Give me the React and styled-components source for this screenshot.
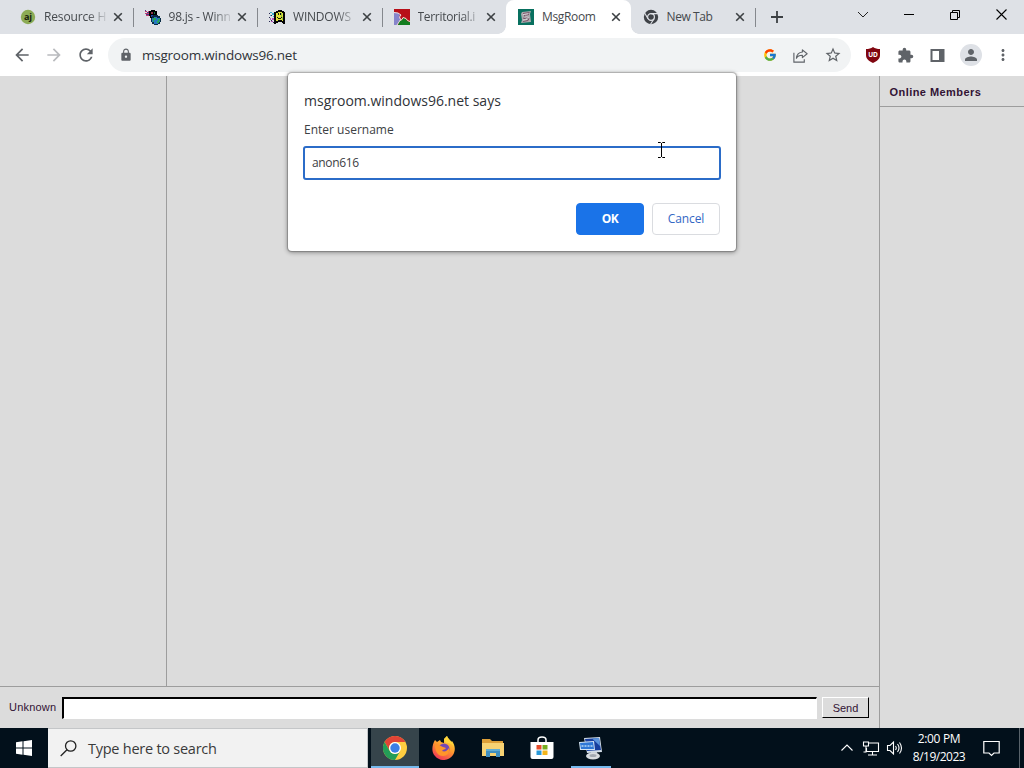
import React from "react";
import styled, { createGlobalStyle } from "styled-components";
import {
  MdArrowBack,
  MdArrowForward,
  MdRefresh,
  MdLock,
  MdStarBorder,
  MdExtension,
  MdPerson,
  MdMoreVert,
} from "react-icons/md";
import { FcGoogle } from "react-icons/fc";

const Global = createGlobalStyle`
  * { box-sizing: border-box; }
  body { margin: 0; overflow: hidden; }
  button, input { margin: 0; font: inherit; }
  svg { display: block; flex: none; }
`;

const Screen = styled.div`
  width: 1024px;
  height: 768px;
  position: relative;
  display: flex;
  flex-direction: column;
  overflow: hidden;
  background: #dcdcdc;
  font-family: "Open Sans", "Noto Sans", sans-serif;
`;

const Label = styled.span`
  white-space: nowrap;
  font-size: ${(p) => p.$size || 12}px;
  letter-spacing: ${(p) => p.$track || 0}px;
  line-height: ${(p) => p.$line || 16}px;
  font-weight: ${(p) => p.$weight || 400};
  color: ${(p) => p.$color || "#3c4043"};
`;

/* ---- Tab strip ---- */
const TabStrip = styled.header`
  height: 34px;
  flex: none;
  display: flex;
  padding-left: 8px;
  background: #dee1e6;
`;

const Tab = styled.div`
  width: 124.5px;
  height: 34px;
  position: relative;
  display: flex;
  align-items: center;
  padding: 0 10px 0 12px;
  background: ${(p) => (p.$active ? "#fff" : "transparent")};
  border-radius: 8px 8px 0 0;
  ${(p) =>
    p.$active &&
    `&::before, &::after {
      content: ""; position: absolute; bottom: 0; width: 8px; height: 8px;
    }
    &::before { left: -8px; background: radial-gradient(circle at 0 0, transparent 7.5px, #fff 8px); }
    &::after { right: -8px; background: radial-gradient(circle at 100% 0, transparent 7.5px, #fff 8px); }`}
`;

const TabTitle = styled.div`
  width: 62px;
  margin-left: 8px;
  display: flex;
  mask-image: ${(p) => (p.$fade ? "linear-gradient(90deg, #000 70%, transparent 105%)" : "none")};
`;

const TabClose = styled.span`
  display: flex;
  margin-left: auto;
`;

const Divider = styled.i`
  position: absolute;
  right: -1px;
  top: 8px;
  width: 1px;
  height: 19px;
  background: #85888d;
`;

const NewTab = styled.div`
  display: flex;
  align-items: center;
  padding-left: 16px;
`;

const WindowButtons = styled.div`
  margin-left: auto;
  display: flex;
  height: 29px;
`;

const WindowButton = styled.div`
  width: 46px;
  display: flex;
  align-items: center;
  justify-content: center;
`;

/* ---- Toolbar ---- */
const Toolbar = styled.nav`
  height: 42px;
  flex: none;
  display: flex;
  align-items: center;
  padding: 0 12px;
  background: #fff;
  color: #5f6368;
`;

const NavIcons = styled.div`
  display: flex;
  gap: 12px;
  width: 96px;
`;

const AddressBar = styled.div`
  width: 744px;
  height: 34px;
  display: flex;
  align-items: center;
  padding: 0 9px 0 11px;
  border-radius: 17px;
  background: #f1f3f4;
`;

const AddressText = styled.div`
  flex: 1;
  display: flex;
  margin-left: 9px;
`;

const AddressActions = styled.div`
  display: flex;
  align-items: center;
  gap: 15px;
  margin-left: -1px;
`;

const Extensions = styled.div`
  flex: 1;
  display: flex;
  align-items: center;
  gap: 15.5px;
  margin-left: 14px;
`;

const PanelIcon = styled.div`
  margin: 0 -1px 0 1px;
`;

const Avatar = styled.div`
  width: 22px;
  height: 22px;
  display: flex;
  align-items: center;
  justify-content: center;
  border-radius: 50%;
  background: #dee1e6;
`;

const MenuIcon = styled.div`
  margin-left: -3px;
`;

/* ---- Chat page ---- */
const Page = styled.main`
  flex: 1;
  display: flex;
  font-family: "Liberation Sans", Arial, sans-serif;
`;

const ChatArea = styled.section`
  width: 880px;
  display: flex;
  flex-direction: column;
  border-right: 1px solid #9d9d9d;
`;

const Panels = styled.div`
  flex: 1;
  display: flex;
  border-bottom: 1px solid #9d9d9d;
`;

const Channels = styled.aside`
  width: 167px;
  border-right: 1px solid #9d9d9d;
`;

const Composer = styled.div`
  height: 41px;
  display: flex;
  align-items: center;
  padding: 0 10px 0 9px;
`;

const NameCell = styled.div`
  width: 53px;
  display: flex;
  padding-bottom: 1px;
`;

const MessageBox = styled.div`
  flex: 1;
  height: 22px;
  background: #fff;
  border: 1px solid;
  border-width: 2px 1px 1px 2px;
  border-color: #000 #fff #fff #000;
  margin-right: 5px;
`;

const SendButton = styled.button`
  width: 47px;
  height: 21px;
  padding: 0;
  display: flex;
  align-items: center;
  justify-content: center;
  background: #dcdcdc;
  border: 1px solid;
  border-color: #fff #000 #000 #fff;
`;

const Members = styled.aside`
  flex: 1;
`;

const MembersHeader = styled.div`
  height: 31px;
  display: flex;
  align-items: center;
  padding: 1px 0 0 9.5px;
  border-bottom: 1px solid #9d9d9d;
`;

/* ---- Prompt dialog ---- */
const Dialog = styled.div`
  position: absolute;
  left: 288px;
  top: 73px;
  width: 448px;
  height: 178px;
  display: flex;
  flex-direction: column;
  padding: 17px 16px 16px;
  background: #fff;
  border-radius: 4px;
  box-shadow: 0 0 1px 0.5px rgba(0, 0, 0, 0.22), 0 1px 4px 1px rgba(0, 0, 0, 0.32);
`;

const DialogMessage = styled.div`
  display: flex;
  margin-top: 8px;
`;

const DialogField = styled.div`
  height: 34px;
  margin: 6px -1px 0;
  display: flex;
  align-items: center;
  padding: 0 7px;
  border: 2px solid #2b6cc8;
  border-radius: 3px;
`;

const DialogButtons = styled.div`
  margin-top: auto;
  display: flex;
  justify-content: flex-end;
  gap: 8px;
`;

const DialogButton = styled.button`
  width: 68px;
  height: 32px;
  padding: 0;
  display: flex;
  align-items: center;
  justify-content: center;
  border-radius: 4px;
  border: 1px solid ${(p) => (p.$primary ? "#1a73e8" : "#dadce0")};
  background: ${(p) => (p.$primary ? "#1a73e8" : "#fff")};
`;

const Pointer = styled.div`
  position: absolute;
  left: 657px;
  top: 142px;
`;

/* ---- Taskbar ---- */
const Taskbar = styled.footer`
  height: 40px;
  flex: none;
  display: flex;
  background: #02101b;
`;

const StartButton = styled.div`
  width: 48px;
  display: flex;
  align-items: center;
  justify-content: center;
`;

const SearchBox = styled.div`
  width: 320px;
  margin-right: 3px;
  display: flex;
  align-items: center;
  gap: 11px;
  padding: 1px 0 0 12px;
  background: #f2f2f2;
  border: 1px solid #c4c6c8;
  border-left: 0;
`;

const TaskButton = styled.div`
  width: 48px;
  margin-right: 1px;
  display: flex;
  align-items: center;
  justify-content: center;
  background: ${(p) => (p.$active ? "#36444b" : "transparent")};
  box-shadow: ${(p) => (p.$running ? "inset 0 -2px #76b9ed" : "none")};
`;

const TaskWindow = styled(TaskButton)`
  width: 40px;
  margin-left: 4px;
`;

const Tray = styled.div`
  margin-left: auto;
  display: flex;
  align-items: center;
`;

const Clock = styled.div`
  width: 72px;
  display: flex;
  flex-direction: column;
  align-items: center;
`;

const Notifications = styled.div`
  width: 33px;
  display: flex;
  justify-content: center;
`;

const ShowDesktop = styled.div`
  width: 5px;
  height: 40px;
  margin-left: 11px;
  border-left: 1px solid #59636b;
`;

const AjIcon = () => (
  <svg width="16" height="16" viewBox="0 0 16 16">
    <circle cx="8" cy="8" r="7.2" fill="#8cab55" />
    <text x="8" y="11" textAnchor="middle" fontFamily="Open Sans, sans-serif" fontWeight="700" fontSize="9" fill="#16200c">aj</text>
  </svg>
);

const Win98Icon = () => (
  <svg width="16" height="16" viewBox="0 0 16 16" shapeRendering="crispEdges">
    <path fill="#c23a72" d="M0 2h2v1H0zM3 2h2v1H3zM0 4h4v1H0zM1 6h3v1H1z" />
    <path fill="#4a3f86" d="M0 1h1v1H0zM2 3h3v1H2zM1 5h3v1H1z" />
    <path fill="#000" d="M6 1h4v1h2v6h1v1H5V7H4V2h2z" />
    <path fill="#8d3447" d="M6 3h2v2H6z" />
    <path fill="#177a3c" d="M9 3h1v2H9z" />
    <path fill="#b5b04a" d="M9 6h1v1H9z" />
    <path fill="#2747a9" d="M6 6h2v2H6z" />
    <path fill="#0a2c45" d="M8 6h5v1h2v2h1v4h-1v2h-2v1H9v-1H7v-2H6V9h1V7h1z" />
    <path fill="#2677bf" d="M9 8h3v1h3v4h-2v2H9v-2H7V9h2z" />
    <path fill="#25a957" d="M9 9h2v2H9v2H8V9h1zM13 10h2v2h-1v2h-2v-2h1z" />
  </svg>
);

const Win95Icon = () => (
  <svg width="16" height="16" viewBox="0 0 16 16" shapeRendering="crispEdges">
    <path fill="#39aecb" d="M1 3h2v1H1zM3 4h2v2H3zM1 6h1v1H1zM4 7h1v1H4z" />
    <path fill="#b950b9" d="M1 9h1v2H1zM3 9h2v2H3zM2 12h2v1H2z" />
    <path fill="#252850" d="M0 4h1v1H0zM2 6h1v1H2zM0 8h1v1H0zM2 11h1v1H2zM0 12h1v1H0zM4 13h1v1H4z" />
    <path fill="#050505" d="M5 3h2V2h2V1h4v1h2v1h1v12h-2v-1h-1v-1H9v1H7v1H5z" />
    <path fill="#dfe03a" d="M9 3h4v1h1v8h-1v-1H9v1H7V4h2z" />
    <path fill="#9bc83a" d="M12 4h1v4h-1zM13 8h1v3h-1z" />
    <path fill="#111" d="M9 4h1v2H9zM11 4h1v2h-1zM8 8h1v1H8zM9 9h3v1H9zM12 8h1v1h-1z" />
  </svg>
);

const TerritorialIcon = () => (
  <svg width="16" height="16" viewBox="0 0 16 16">
    <path fill="#b80f18" d="M0 0h16v16H0z" />
    <path fill="#8784cb" d="M0 3.500l4 .5 2 2-1 2 2 2-2 3-2 3H0z" />
    <path fill="#137d20" d="M4 16l1-4 3-1 1-2 3 1 1 2 3 1v3z" />
    <path fill="none" stroke="#eee1df" strokeWidth="1" d="M0 3.500l4 .5 3 2-1.500 2L6.500 10.500 5 13l-2 3M6 11.500l2-1 1-2 3 1 1.500 2 2.500 1" />
  </svg>
);

const MsgRoomIcon = () => (
  <svg width="16" height="16" viewBox="0 0 16 16">
    <path fill="#08705f" d="M0 0h16v16H0z" />
    <path fill="#aaa9ad" d="M4 3l9-1-1 3 1 8-10 1 1-3-1-6z" />
    <path stroke="#7c5268" strokeWidth="1" fill="none" d="M5 4.500l6.500-1M11 5.500l-5 1 5 3-1 2-5 1M5 9l3 1" />
    <path stroke="#e0dfe1" strokeWidth=".8" fill="none" d="M5 5.600l5-.8M7 7l4 2M5 11l4-.6" />
  </svg>
);

const ChromeMono = () => (
  <svg width="16" height="16" viewBox="0 0 16 16">
    <circle cx="8" cy="8" r="7.2" fill="#3f4247" />
    <circle cx="8" cy="8" r="3.4" fill="none" stroke="#dee1e6" strokeWidth="1.2" />
    <path d="M8 4.600h7M5 9.700L1.500 3.800M11 9.800L7.400 15.500" stroke="#dee1e6" strokeWidth="1.1" />
  </svg>
);

const Cross = () => (
  <svg width="10" height="10" viewBox="0 0 10 10">
    <path d="M1.200 1.200l7.600 7.600M8.800 1.200L1.200 8.800" stroke="#3c4043" strokeWidth="1.600" />
  </svg>
);

const ShareIcon = () => (
  <svg width="17" height="17" viewBox="0 0 18 18" fill="none" stroke="#5f6368" strokeWidth="1.200">
    <path d="M2 6v10h11v-3" />
    <path d="M11 3l5 4.200-5 4V8.800C8 8.700 6 9.600 4.700 12 5 8 7.400 5.700 11 5.300z" strokeLinejoin="round" />
  </svg>
);

const Shield = () => (
  <svg width="16" height="16" viewBox="0 0 16 16">
    <path fill="#800610" d="M8 0c2 1.400 4.300 2 7 2v6c0 4-3 6.300-7 8-4-1.700-7-4-7-8V2c2.700 0 5-.6 7-2z" />
    <text x="8" y="9.500" textAnchor="middle" fontFamily="Open Sans, sans-serif" fontWeight="700" fontSize="6.500" fill="#fff">UD</text>
  </svg>
);

const ChromeColor = () => (
  <svg width="24" height="24" viewBox="0 0 24 24">
    <circle cx="12" cy="12" r="12" fill="#ffcd40" />
    <path fill="#e14436" d="M1.600 6A12 12 0 0 1 22.400 6H12a6 6 0 0 0-5.200 9z" />
    <path fill="#249d57" d="M1.600 6A12 12 0 0 0 12 24l5.200-9A6 6 0 0 1 6.800 15z" />
    <circle cx="12" cy="12" r="6" fill="#fff" />
    <circle cx="12" cy="12" r="4.700" fill="#3c7fe5" />
  </svg>
);

const Firefox = () => (
  <svg width="24" height="24" viewBox="0 0 24 24">
    <defs>
      <linearGradient id="fox" x1=".8" y1="0" x2=".3" y2="1">
        <stop offset="0" stopColor="#ffe63d" />
        <stop offset=".5" stopColor="#ff982e" />
        <stop offset="1" stopColor="#f03458" />
      </linearGradient>
    </defs>
    <path fill="url(#fox)" d="M3 4l2 2 3-2 1 2 3 1V3l3-3c1 3 3 3 4 6l1-1c3 4 4 9 1 14-4 6-13 7-18 1C-1 16 0 9 3 4z" />
    <circle cx="12" cy="13" r="5.500" fill="#7647b5" />
    <path fill="#ff952a" d="M3 9c4-1 5 1 8 2l3 1c-1 2-3 1-4 3 3 1 5 0 7-3 1 5-2 8-6 8-4 0-8-3-8-11z" />
    <path fill="#ffd53b" d="M12 3l3-3c1 4 6 5 7 11-2-3-4-4-6-4-3 0-4-2-4-4z" />
  </svg>
);

const Folder = () => (
  <svg width="22" height="20" viewBox="0 0 22 20">
    <path fill="#dd9f38" d="M0 1h8l2 2h11v5H0z" />
    <path fill="#f7d273" d="M0 5h22v13H0z" />
    <path fill="#408fc0" d="M4 11h14v8h-4v-4H8v4H4z" />
    <path fill="#62add3" d="M4 11h14v2H4z" />
  </svg>
);

const Store = () => (
  <svg width="24" height="24" viewBox="0 0 24 24">
    <path d="M8 7V4c0-4 8-4 8 0v3" fill="none" stroke="#fff" strokeWidth="1.500" />
    <path d="M.5 6h23v15q0 2-2 2h-19q-2 0-2-2z" fill="#fff" />
    <path d="M6.500 9h5v4.500h-5z" fill="#e74c2b" />
    <path d="M12.500 9h5v4.500h-5z" fill="#77ad20" />
    <path d="M6.500 14.500h5V19h-5z" fill="#2999d8" />
    <path d="M12.500 14.500h5V19h-5z" fill="#f3b51b" />
  </svg>
);

const RemotePc = () => (
  <svg width="24" height="24" viewBox="0 0 24 24">
    <path fill="#b6bbc4" d="M12 15h6v4h-6z" />
    <ellipse cx="14" cy="20" rx="7" ry="3.500" fill="#d9dce0" />
    <ellipse cx="14" cy="19.500" rx="3.500" ry="1.500" fill="#a2a8b0" />
    <path fill="#d3dde8" d="M5 2l16-1 2 15-15 1z" />
    <path fill="#183f9f" d="M6 3l14-1 2 12-14 1z" />
    <path fill="#5b94dd" d="M13 2.500l7-.5 1 8z" />
    <path fill="#d3e3f3" d="M0 6l15-1 1 9H1z" />
    <path fill="#2e77d6" d="M1 7l13-1 1 7H2z" />
    <path stroke="#b5d7f7" strokeDasharray="2 1" strokeWidth="1.500" d="M2.500 10h11" />
  </svg>
);

const TABS = [
  { title: "Resource H", icon: AjIcon, fade: true, line: true, track: -0.15 },
  { title: "98.js - Winn", icon: Win98Icon, fade: true, line: true, track: -0.2 },
  { title: "WINDOWS", icon: Win95Icon, fade: true, line: true, track: -0.2 },
  { title: "Territorial.i", icon: TerritorialIcon, fade: true, track: -0.3 },
  { title: "MsgRoom", icon: MsgRoomIcon, active: true, track: -0.35 },
  { title: "New Tab", icon: ChromeMono, line: true, track: -0.4 },
];

export default function App() {
  return (
    <Screen>
      <Global />
      <TabStrip>
        {TABS.map(({ title, icon: Icon, fade, line, active, track }) => (
          <Tab key={title} $active={active}>
            <Icon />
            <TabTitle $fade={fade}>
              <Label $size={12} $track={track} $color="#45494d">{title}</Label>
            </TabTitle>
            <TabClose><Cross /></TabClose>
            {line && <Divider />}
          </Tab>
        ))}
        <NewTab>
          <svg width="12" height="12" viewBox="0 0 12 12">
            <path d="M6 0v12M0 6h12" stroke="#3c4043" strokeWidth="1.800" />
          </svg>
        </NewTab>
        <WindowButtons>
          <WindowButton>
            <svg width="12" height="8" viewBox="0 0 12 8"><path d="M1 1l5 5 5-5" fill="none" stroke="#222" /></svg>
          </WindowButton>
          <WindowButton>
            <svg width="10" height="10" viewBox="0 0 10 10"><path d="M0 4.500h10" stroke="#000" /></svg>
          </WindowButton>
          <WindowButton>
            <svg width="10" height="10" viewBox="0 0 10 10" fill="none" stroke="#000"><path d="M.5 2.500h7v7h-7zM2.500 2.500v-2h7v7h-2" /></svg>
          </WindowButton>
          <WindowButton>
            <svg width="11" height="11" viewBox="0 0 11 11"><path d="M.5.5l10 10M10.500.5l-10 10" stroke="#000" strokeWidth="1.100" /></svg>
          </WindowButton>
        </WindowButtons>
      </TabStrip>

      <Toolbar>
        <NavIcons>
          <MdArrowBack size={20} />
          <MdArrowForward size={20} color="#b9bbbe" />
          <MdRefresh size={20} />
        </NavIcons>
        <AddressBar>
          <MdLock size={14} />
          <AddressText>
            <Label $size={13.5} $line={20} $track={-0.2} $color="#303338">msgroom.windows96.net</Label>
          </AddressText>
          <AddressActions>
            <FcGoogle size={14} />
            <ShareIcon />
            <MdStarBorder size={18} />
          </AddressActions>
        </AddressBar>
        <Extensions>
          <Shield />
          <MdExtension size={17} />
          <PanelIcon>
            <svg width="15" height="15" viewBox="0 0 15 15">
              <path fill="#5f6368" d="M.5 1h14v13H.5zM2.500 3v9H9V3z" fillRule="evenodd" />
            </svg>
          </PanelIcon>
          <Avatar><MdPerson size={18} /></Avatar>
          <MenuIcon><MdMoreVert size={18} /></MenuIcon>
        </Extensions>
      </Toolbar>

      <Page>
        <ChatArea>
          <Panels><Channels /></Panels>
          <Composer>
            <NameCell><Label $size={11} $track={0.2} $color="#321334">Unknown</Label></NameCell>
            <MessageBox />
            <SendButton><Label $size={11} $color="#321334">Send</Label></SendButton>
          </Composer>
        </ChatArea>
        <Members>
          <MembersHeader>
            <Label $size={11} $track={0.45} $weight={700} $color="#321334">Online Members</Label>
          </MembersHeader>
        </Members>
      </Page>

      <Taskbar>
        <StartButton>
          <svg width="16" height="16" viewBox="0 0 16 16" fill="#fff">
            <path d="M0 2.200L6.500 1.300V7.500H0zM7.500 1.150L16 0V7.500H7.500zM0 8.500h6.500v6.200L0 13.800zM7.500 8.500H16V16L7.500 14.850z" />
          </svg>
        </StartButton>
        <SearchBox>
          <svg width="17" height="17" viewBox="0 0 17 17" fill="none" stroke="#222" strokeWidth="1.300">
            <circle cx="10.700" cy="6" r="5.200" /><path d="M7 9.700L.7 16" />
          </svg>
          <Label $size={14.5} $line={21} $track={-0.25} $color="#3a3a3a">Type here to search</Label>
        </SearchBox>
        <TaskButton $active $running><ChromeColor /></TaskButton>
        <TaskButton><Firefox /></TaskButton>
        <TaskButton><Folder /></TaskButton>
        <TaskButton><Store /></TaskButton>
        <TaskWindow $running><RemotePc /></TaskWindow>
        <Tray>
          <svg width="62" height="18" viewBox="0 0 62 18" fill="none" stroke="#fff" strokeWidth="1.100">
            <path d="M.5 11.500L6 6l5.500 5.500" />
            <path d="M27 4h10.500v8.500h-12V9M31.500 13v3M27 16h9M22.500 3h5v4h-5zM25 7v6h-2.500" />
            <path d="M46.500 6.500h2.500L52.500 3v12L49 11.500h-2.500zM54.500 7q1.500 2 0 4M56.500 5q3 4 0 8M58.500 3.500q4 5.500 0 11" />
          </svg>
          <Clock>
            <Label $size={12} $line={18} $track={-0.35} $color="#fff">2:00 PM</Label>
            <Label $size={12} $line={18} $track={-0.5} $color="#fff">8/19/2023</Label>
          </Clock>
          <Notifications>
            <svg width="17" height="17" viewBox="0 0 17 17" fill="none" stroke="#fff" strokeWidth="1.200">
              <path d="M.8 1.500h15.400v11.500H11L8.500 15.500 6 13H.8z" />
            </svg>
          </Notifications>
          <ShowDesktop />
        </Tray>
      </Taskbar>

      <Dialog>
        <Label $size={14} $line={22} $color="#303338">msgroom.windows96.net says</Label>
        <DialogMessage><Label $size={12} $line={20}>Enter username</Label></DialogMessage>
        <DialogField><Label $size={12} $track={-0.35}>anon616</Label></DialogField>
        <DialogButtons>
          <DialogButton $primary><Label $weight={700} $track={-0.5} $color="#fff">OK</Label></DialogButton>
          <DialogButton><Label $weight={500} $track={-0.1} $color="#3367c4">Cancel</Label></DialogButton>
        </DialogButtons>
      </Dialog>
      <Pointer>
        <svg width="9" height="17" viewBox="0 0 9 17" fill="none" stroke="#000">
          <path d="M1 .5h2.500l1 1 1-1H8M4.500 1v14M1 15.500h2.500l1-1 1 1H8" />
        </svg>
      </Pointer>
    </Screen>
  );
}
